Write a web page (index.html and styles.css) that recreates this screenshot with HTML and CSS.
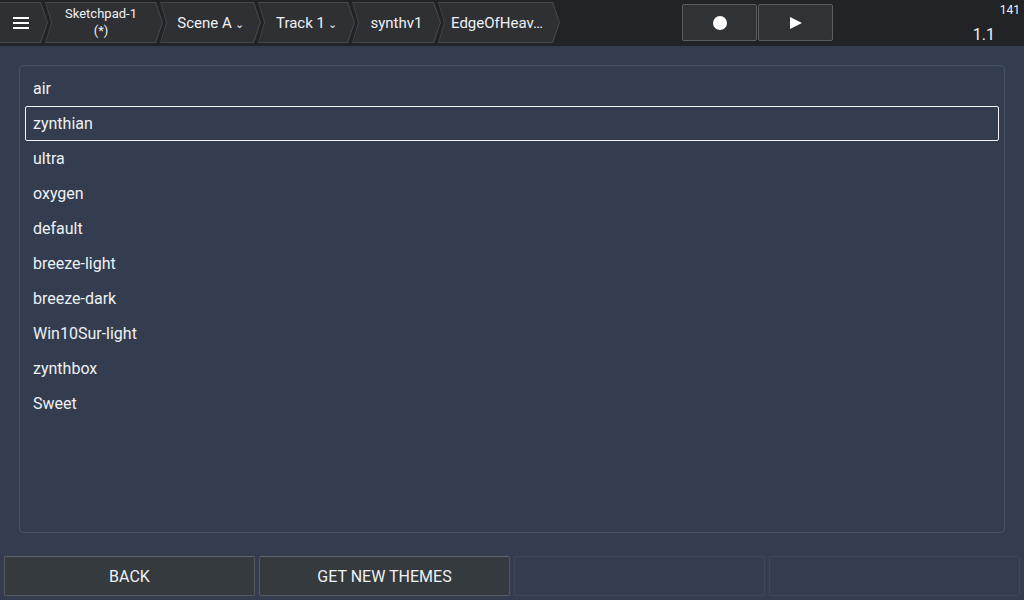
FILE: index.html
```html
<!DOCTYPE html>
<html>
<head>
<meta charset="utf-8">
<link rel="stylesheet" href="styles.css">
</head>
<body>
<div class="app">
  <header class="topbar">
    <nav class="crumbs">
      <div class="seg seg-menu">
        <svg class="burger" width="16" height="14" viewBox="0 0 16 14"><rect x="0" y="1" width="16" height="2" fill="#fff"/><rect x="0" y="6" width="16" height="2" fill="#fff"/><rect x="0" y="11" width="16" height="2" fill="#fff"/></svg>
      </div>
      <div class="seg w-sketch"><span class="lbl two">Sketchpad-1<br>(*)</span></div>
      <div class="seg w-scene"><span class="lbl">Scene A</span><span class="caret">⌄</span></div>
      <div class="seg w-track"><span class="lbl">Track 1</span><span class="caret">⌄</span></div>
      <div class="seg w-synth"><span class="lbl">synthv1</span></div>
      <div class="seg w-edge"><span class="lbl">EdgeOfHeav…</span></div>
    </nav>
    <div class="transport">
      <button class="tbtn"><span class="dot"></span></button>
      <button class="tbtn"><svg width="14" height="14" viewBox="0 0 14 14"><polygon points="1,1 13,7 1,13" fill="#fff"/></svg></button>
    </div>
    <div class="status">
      <span class="bpm">141</span>
      <span class="pos">1.1</span>
    </div>
  </header>
  <main class="content">
    <section class="panel">
      <ul class="list">
        <li class="item">air</li>
        <li class="item selected">zynthian</li>
        <li class="item">ultra</li>
        <li class="item">oxygen</li>
        <li class="item">default</li>
        <li class="item">breeze-light</li>
        <li class="item">breeze-dark</li>
        <li class="item">Win10Sur-light</li>
        <li class="item">zynthbox</li>
        <li class="item">Sweet</li>
      </ul>
    </section>
  </main>
  <footer class="actions">
    <button class="abtn">BACK</button>
    <button class="abtn">GET NEW THEMES</button>
    <button class="abtn empty"></button>
    <button class="abtn empty"></button>
  </footer>
</div>
</body>
</html>
```
FILE: styles.css
```css
* { box-sizing: border-box; }
html, body { margin: 0; padding: 0; }
body {
  width: 1024px;
  height: 600px;
  overflow: hidden;
  background: #333d4f;
  font-family: Roboto, "Liberation Sans", sans-serif;
  color: #eef1f5;
}
.app { display: flex; flex-direction: column; height: 600px; }

.topbar {
  height: 46px;
  background: #212326;
  display: flex;
  align-items: flex-start;
  flex: none;
}
.crumbs { display: flex; padding-top: 2px; }
.seg {
  position: relative;
  height: 41px;
  display: flex;
  align-items: center;
  justify-content: center;
  margin-right: -3px;
  color: #eef1f5;
  font-size: 15px;
}
.seg::before, .seg::after {
  content: "";
  position: absolute;
  inset: 0;
  clip-path: polygon(0 0, calc(100% - 7px) 0, 100% 50%, calc(100% - 7px) 100%, 0 100%, 6px 50%);
}
.seg::before { background: #44474b; }
.seg::after {
  background: #2e3033;
  inset: 1px 1px 1px 1px;
}
.seg > * { position: relative; z-index: 1; }
.seg-menu { width: 48px; }
.seg-menu::before, .seg-menu::after {
  clip-path: polygon(0 0, calc(100% - 7px) 0, 100% 50%, calc(100% - 7px) 100%, 0 100%);
}
.seg-menu::after { inset: 1px 1px 1px 0; }
.seg-menu .burger { margin-right: 7px; }
.w-sketch { width: 118px; padding-right: 6px; }
.w-scene { width: 101px; }
.w-track { width: 97px; }
.w-synth { width: 89px; }
.w-edge { width: 122px; padding-right: 4px; }
.lbl.two { font-size: 13px; text-align: center; line-height: 17px; margin-top: -1px; }
.caret { font-size: 11px; margin-left: 3px; margin-top: 4px; }

.transport { display: flex; margin-left: 125px; margin-top: 4px; gap: 1px; }
.tbtn {
  width: 75px;
  height: 37px;
  background: #303336;
  border: 1px solid #5b5e62;
  border-radius: 2px;
  display: flex;
  align-items: center;
  justify-content: center;
  padding: 0;
}
.dot { width: 14px; height: 14px; border-radius: 50%; background: #fff; }

.status {
  margin-left: auto;
  display: flex;
  flex-direction: column;
  align-items: flex-end;
  padding-right: 4px;
  color: #eef1f5;
}
.bpm { font-size: 12px; margin-top: 3px; line-height: 14px; }
.pos { font-size: 16px; margin-top: 9px; margin-right: 25px; line-height: 18px; }

.content { flex: 1; padding: 19px 19px 23px 19px; display: flex; }
.panel {
  flex: 1;
  border: 1px solid #475166;
  border-radius: 4px;
  padding: 5px 5px;
}
.list { list-style: none; margin: 0; padding: 0; }
.item {
  height: 35px;
  line-height: 33px;
  padding-left: 7px;
  font-size: 16px;
  color: #eef1f5;
  border: 1px solid transparent;
  border-radius: 2px;
}
.item.selected { border-color: #f2f4f7; }

.actions {
  height: 44px;
  flex: none;
  display: flex;
  gap: 4px;
  padding: 0 4px 4px 4px;
}
.abtn {
  flex: 1;
  height: 40px;
  background: #353a3e;
  border: 1px solid #53585d;
  border-top-color: #5e6368;
  border-radius: 2px;
  color: #eef1f5;
  font-family: Roboto, "Liberation Sans", sans-serif;
  font-size: 16px;
  padding: 0;
}
.abtn.empty { background: transparent; border-color: #3d475b; }
```
